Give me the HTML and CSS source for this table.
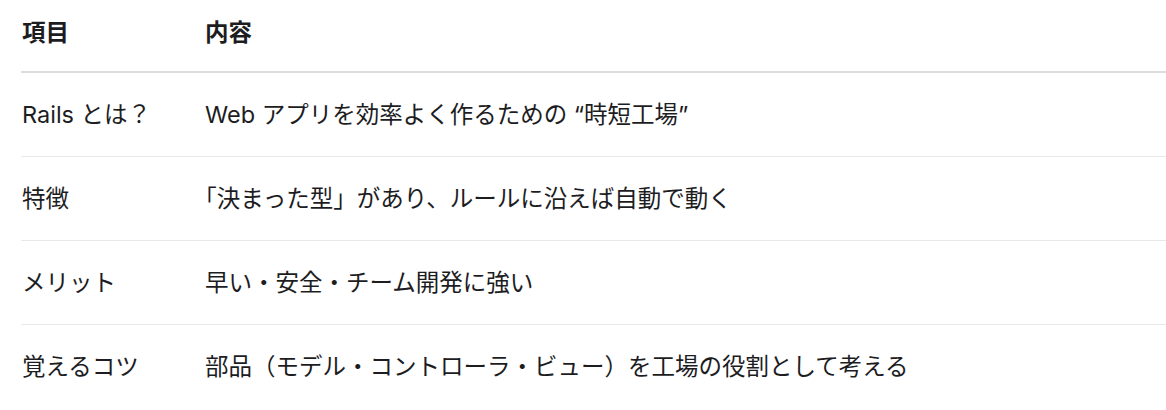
FILE: index.html
```html
<!DOCTYPE html>
<html lang="ja">
<head>
<meta charset="utf-8">
<link rel="stylesheet" href="styles.css">
</head>
<body>
<div class="table">
  <div class="row head">
    <div class="cell key">項目</div>
    <div class="cell val">内容</div>
  </div>
  <div class="row">
    <div class="cell key">Rails とは？</div>
    <div class="cell val">Web アプリを効率よく作るための “時短工場”</div>
  </div>
  <div class="row">
    <div class="cell key">特徴</div>
    <div class="cell val">「決まった型」があり、ルールに沿えば自動で動く</div>
  </div>
  <div class="row">
    <div class="cell key">メリット</div>
    <div class="cell val">早い・安全・チーム開発に強い</div>
  </div>
  <div class="row last">
    <div class="cell key">覚えるコツ</div>
    <div class="cell val">部品（モデル・コントローラ・ビュー）を工場の役割として考える</div>
  </div>
</div>
</body>
</html>
```

FILE: styles.css
```css
html, body {
  margin: 0;
  padding: 0;
  background: #ffffff;
}
body {
  font-family: Inter, "Noto Sans CJK JP", sans-serif;
  font-size: 23.5px;
  color: #1d1d1f;
}
.table {
  margin-left: 21px;
  display: flex;
  flex-direction: column;
}
.row {
  display: grid;
  grid-template-columns: 183px 1fr;
  padding: 25px 0;
  line-height: 33px;
  border-bottom: 1px solid #e8e8e8;
}
.row.head {
  padding: 16px 0 22px;
  font-weight: 700;
  border-bottom: 2px solid #dcdcdc;
}
.row.last {
  border-bottom: none;
}
.cell {
  padding-left: 1px;
  white-space: nowrap;
  text-spacing-trim: trim-start;
}
```
